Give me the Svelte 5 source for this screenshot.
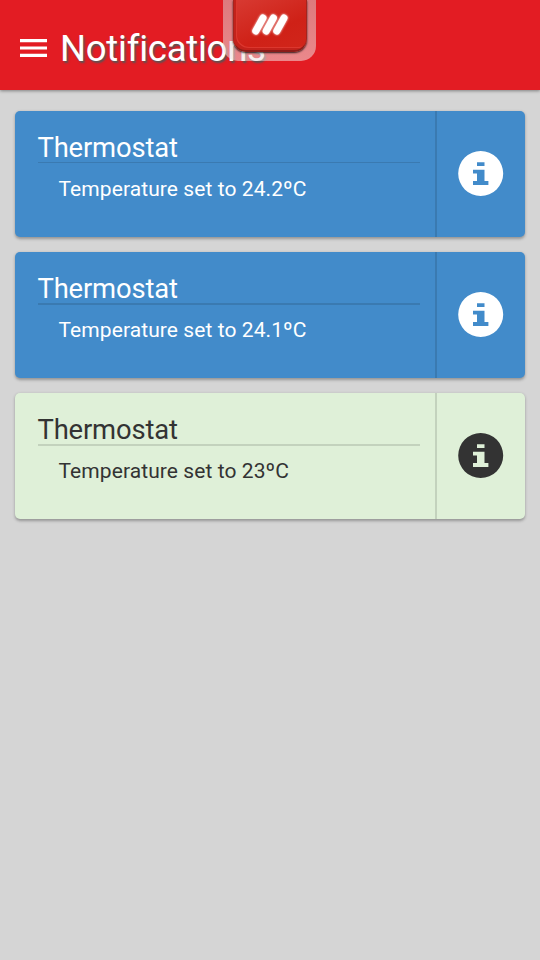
<script>
  const notifications = [
    { title: 'Thermostat', text: 'Temperature set to 24.2ºC', kind: 'primary', rule: 1 },
    { title: 'Thermostat', text: 'Temperature set to 24.1ºC', kind: 'primary', rule: 2 },
    { title: 'Thermostat', text: 'Temperature set to 23ºC', kind: 'success', rule: 2 },
  ];
</script>

<div class="screen">
  <header>
    <svg class="menu" width="27" height="18" viewBox="0 0 27 18" aria-label="Menu">
      <path fill="#fff" d="M0 0h27v3.2H0zM0 7.6h27v2.8H0zM0 14.8h27V18H0z" />
    </svg>
    <h1>Notifications</h1>
    <div class="tab">
      <div class="logo">
        <svg width="46" height="34" viewBox="0 0 46 34">
          <g stroke="#fff" stroke-width="7" stroke-linecap="round">
            <path d="M7.8 23 15 10M18.2 23 25.4 10M28.8 23 36 10" />
          </g>
        </svg>
      </div>
    </div>
  </header>

  <main>
    {#each notifications as n}
      <article class={n.kind}>
        <div class="body">
          <h2 class:thick={n.rule === 2}>{n.title}</h2>
          <p>{n.text}</p>
        </div>
        <div class="side">
          <svg width="46" height="46" viewBox="0 0 46 46" aria-label="Info">
            <path
              fill="currentColor"
              fill-rule="evenodd"
              d="M22.7 0a22.5 22.5 0 1 0 0 45a22.5 22.5 0 1 0 0-45zM19 11.2h7.5v3.8h-7.5zM15 18.7h11.5v11.3h3.9v3.9H15v-3.9h4v-7.5h-4z"
            />
          </svg>
        </div>
      </article>
    {/each}
  </main>
</div>

<style>
  :global(body) {
    background: #d5d5d5;
  }
  .screen {
    height: 960px;
    overflow: hidden;
    background: #d5d5d5;
    font-family: Roboto, 'Noto Sans', sans-serif;
  }
  header {
    position: relative;
    display: flex;
    align-items: center;
    box-sizing: border-box;
    height: 90px;
    padding: 6px 20px 0;
    background: #e31c23;
    box-shadow: 0 1px 3px rgba(0, 0, 0, 0.4);
  }
  .menu {
    display: block;
  }
  h1 {
    margin: 2px 0 0 13px;
    font-size: 36.5px;
    font-weight: 400;
    letter-spacing: -0.24px;
    line-height: 42px;
    color: #fff;
    text-shadow: 1.5px 1.5px 2px #555;
  }
  .tab {
    position: absolute;
    top: 0;
    left: 223px;
    width: 93px;
    height: 61px;
    border-radius: 0 0 15px 15px;
    background: linear-gradient(rgba(215, 205, 205, 0.53), rgba(240, 225, 225, 0.55));
  }
  .logo {
    box-sizing: border-box;
    width: 74px;
    height: 52px;
    margin-left: 10px;
    padding: 8px 0 0 14px;
    border: 1px solid #a5241e;
    border-top: 0;
    border-bottom: 2px solid #8c1c18;
    border-radius: 0 0 13px 13px;
    background: linear-gradient(155deg, #d83a32, #cf2117 60%, #d1261b);
    box-shadow: 0 1px 2px rgba(0, 0, 0, 0.8), inset 3px -3px 0 -1px #c3221b, inset 4px -4px 0 -1px #dc372e;
  }
  .logo svg {
    display: block;
    filter: drop-shadow(0 0 1px #fff);
  }
  main {
    display: flex;
    flex-direction: column;
    gap: 15px;
    padding: 21px 15px;
  }
  article {
    display: flex;
    height: 126px;
    border-radius: 5px;
    box-shadow: 0 1.5px 3px rgba(0, 0, 0, 0.3);
  }
  .primary {
    background: #428bca;
    color: #fff;
  }
  .success {
    background: #dff0d8;
    color: #333;
  }
  .body {
    flex: 1;
    padding: 20px 15px 0 22.5px;
  }
  h2 {
    margin: 0;
    height: 31px;
    border-bottom: 1px solid rgba(0, 0, 0, 0.12);
    font-size: 27.4px;
    font-weight: 400;
    letter-spacing: -0.16px;
    line-height: 34px;
  }
  h2.thick {
    border-bottom-width: 2px;
    margin-bottom: -1px;
  }
  p {
    margin: 14px 0 0 21px;
    font-size: 21px;
    letter-spacing: 0.08px;
    line-height: 24px;
  }
  .side {
    display: flex;
    align-items: center;
    justify-content: center;
    box-sizing: border-box;
    width: 90px;
    border-left: 2px solid rgba(0, 0, 0, 0.12);
  }
</style>
